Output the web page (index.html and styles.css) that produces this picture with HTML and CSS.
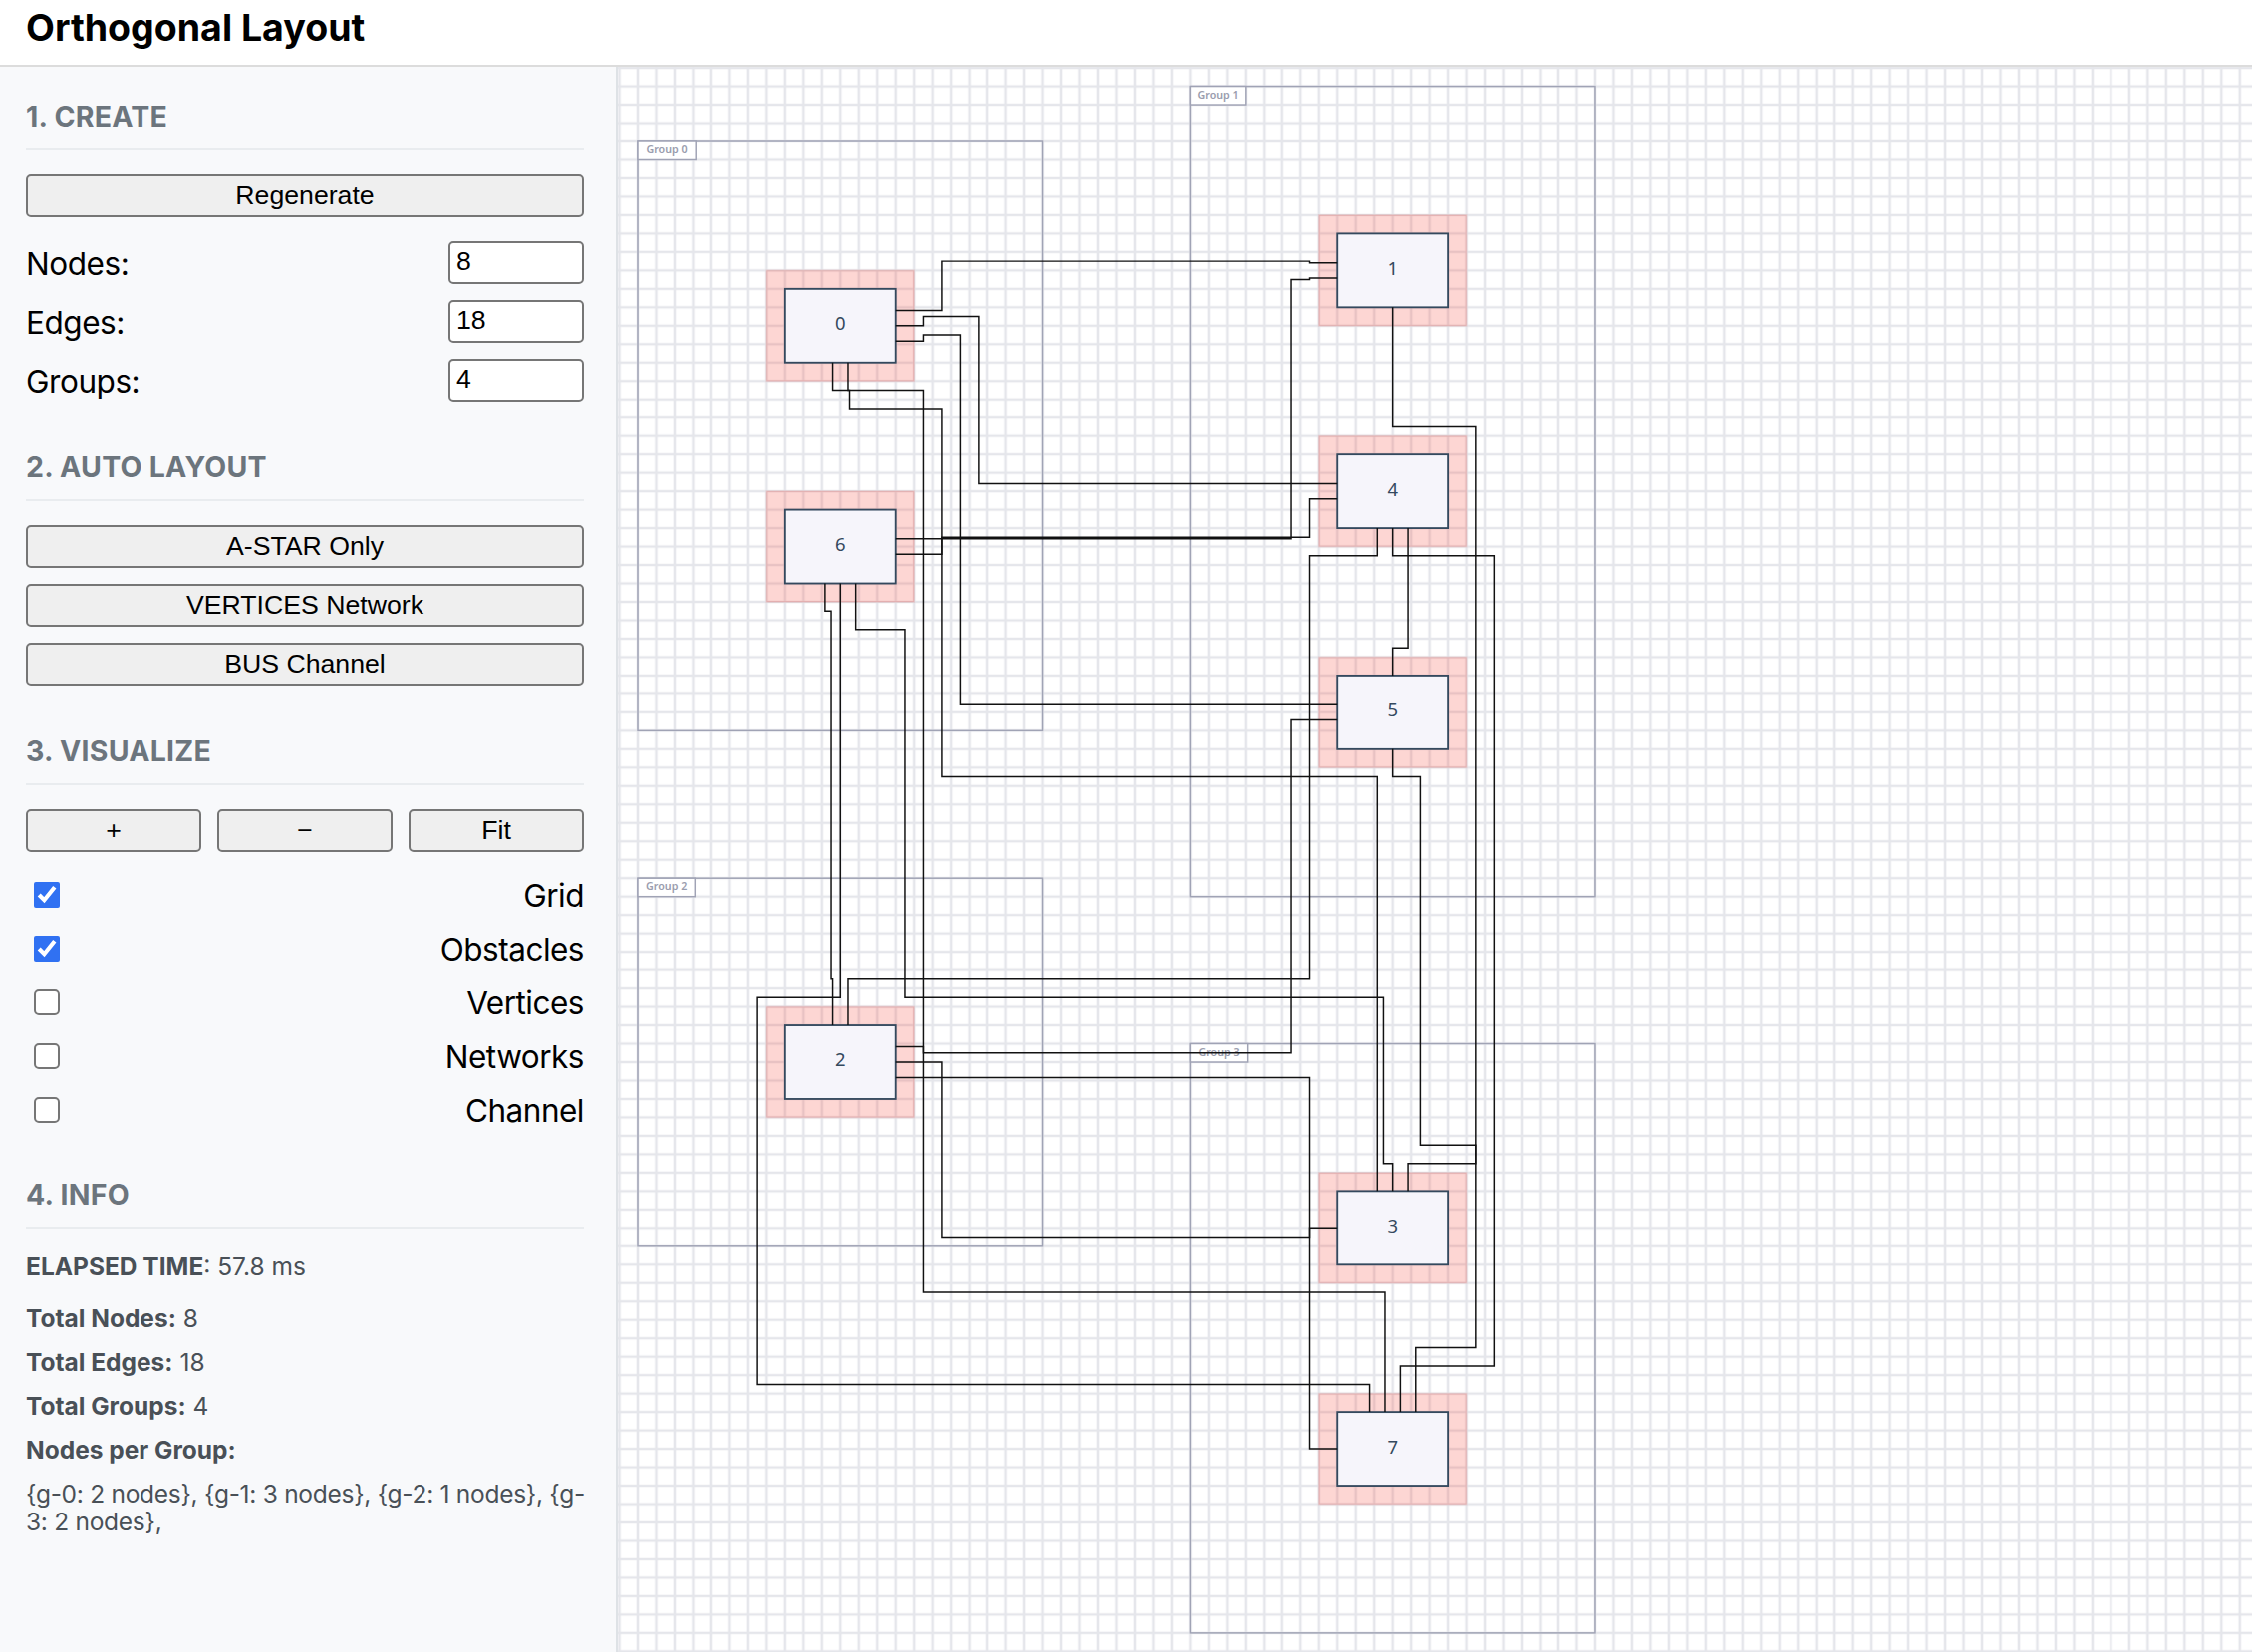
FILE: index.html
```html
<!DOCTYPE html>
<html lang="en">
<head>
<meta charset="utf-8">
<title>Orthogonal Layout</title>
<link rel="stylesheet" href="styles.css">
</head>
<body>
<header class="header"><h1 class="title">Orthogonal Layout</h1></header>
<main class="main">
  <aside class="sidebar">
    <section class="section create">
      <h2 class="heading">1. CREATE</h2>
      <button class="btn">Regenerate</button>
      <label class="field"><span>Nodes:</span><input class="input" type="text" value="8"></label>
      <label class="field"><span>Edges:</span><input class="input" type="text" value="18"></label>
      <label class="field"><span>Groups:</span><input class="input" type="text" value="4"></label>
    </section>
    <section class="section layout">
      <h2 class="heading">2. AUTO LAYOUT</h2>
      <button class="btn">A-STAR Only</button>
      <button class="btn">VERTICES Network</button>
      <button class="btn">BUS Channel</button>
    </section>
    <section class="section visualize">
      <h2 class="heading">3. VISUALIZE</h2>
      <div class="zoom"><button class="btn">+</button><button class="btn">−</button><button class="btn">Fit</button></div>
      <label class="check"><input class="box" type="checkbox" checked><span>Grid</span></label>
      <label class="check"><input class="box" type="checkbox" checked><span>Obstacles</span></label>
      <label class="check"><input class="box" type="checkbox"><span>Vertices</span></label>
      <label class="check"><input class="box" type="checkbox"><span>Networks</span></label>
      <label class="check"><input class="box" type="checkbox"><span>Channel</span></label>
    </section>
    <section class="section info">
      <h2 class="heading">4. INFO</h2>
      <p class="line elapsed"><b>ELAPSED TIME</b>: 57.8 ms</p>
      <p class="line"><b>Total Nodes:</b> 8</p>
      <p class="line"><b>Total Edges:</b> 18</p>
      <p class="line"><b>Total Groups:</b> 4</p>
      <p class="line"><b>Nodes per Group:</b></p>
      <p class="line counts">{g-0: 2 nodes}, {g-1: 3 nodes}, {g-2: 1 nodes}, {g-<br>3: 2 nodes},</p>
    </section>
  </aside>
  <svg class="canvas" width="1640" height="1591" viewBox="620 67 1640 1591">
    <defs>
      <pattern id="grid" width="10" height="10" patternUnits="userSpaceOnUse" patternTransform="translate(640 142) scale(1.848)">
        <path class="grid-line" d="M0 0H10M0 10H10M0 0V10M10 0V10"/>
      </pattern>
    </defs>
    <rect x="620" y="67" width="1640" height="1591" fill="url(#grid)"/>
    <g transform="translate(640 142) scale(1.848)">
      <g class="group">
        <rect x="0" y="0" width="220" height="320"/><rect x="300" y="-30" width="220" height="440"/>
        <rect x="0" y="400" width="220" height="200"/><rect x="300" y="490" width="220" height="320"/>
      </g>
      <g class="tag">
        <rect x="0" y="0" width="31.5" height="10"/><text x="15.7" y="6.6">Group 0</text>
        <rect x="300" y="-30" width="30" height="10"/><text x="315" y="-23.4">Group 1</text>
        <rect x="0" y="400" width="31" height="10"/><text x="15.5" y="406.6">Group 2</text>
        <rect x="300" y="490" width="31" height="10"/><text x="315.5" y="496.6">Group 3</text>
      </g>
      <g class="obstacle">
        <rect x="70" y="70" width="80" height="60"/><rect x="70" y="190" width="80" height="60"/>
        <rect x="70" y="470" width="80" height="60"/><rect x="370" y="40" width="80" height="60"/>
        <rect x="370" y="160" width="80" height="60"/><rect x="370" y="280" width="80" height="60"/>
        <rect x="370" y="560" width="80" height="60"/><rect x="370" y="680" width="80" height="60"/>
      </g>
      <g class="node">
        <rect x="80" y="80" width="60" height="40"/><text x="110" y="102.4">0</text>
        <rect x="80" y="200" width="60" height="40"/><text x="110" y="222.4">6</text>
        <rect x="80" y="480" width="60" height="40"/><text x="110" y="502.4">2</text>
        <rect x="380" y="50" width="60" height="40"/><text x="410" y="72.4">1</text>
        <rect x="380" y="170" width="60" height="40"/><text x="410" y="192.4">4</text>
        <rect x="380" y="290" width="60" height="40"/><text x="410" y="312.4">5</text>
        <rect x="380" y="570" width="60" height="40"/><text x="410" y="592.4">3</text>
        <rect x="380" y="690" width="60" height="40"/><text x="410" y="712.4">7</text>
      </g>
      <g class="edge">
        <path d="M140 91.67H165V65H365V65.83H380"/>
        <path d="M140 100H155V95H185V185.83H380"/>
        <path d="M140 108.33H155V105H175V305.83H380"/>
        <path d="M105.83 120V135H155V625H405.83V690"/>
        <path d="M114.17 120V135H115V145H165V345H401.67V570"/>
        <path d="M140 215.83H355V75H365V74.17H380"/>
        <path d="M140 224.17H165V215H365V194.17H380"/>
        <path d="M101.67 240V255H105V455H105.83V480"/>
        <path d="M110 240V465H65V675H397.5V690"/>
        <path d="M118.33 240V265H145V465H405V555H410V570"/>
        <path d="M401.67 210V225H365V455H114.17V480"/>
        <path d="M140 491.67H155V495H355V314.17H380"/>
        <path d="M140 500H165V595H365V590H380"/>
        <path d="M140 508.33H365V710H380"/>
        <path d="M410 90V155H455V655H422.5V690"/>
        <path d="M410 210V225H465V665H414.17V690"/>
        <path d="M418.33 210V275H410V290"/>
        <path d="M410 330V345H425V545H455V555H418.33V570"/>
      </g>
    </g>
  </svg>
</main>
</body>
</html>
```
FILE: styles.css
```css
* { box-sizing: border-box; }
body { margin: 0; height: 1658px; overflow: hidden; background: #fff; color: #000; font-family: Inter, sans-serif; }
.header { height: 67px; padding: 6px 26px 0; border-bottom: 2px solid #dcdcdc; }
.title { margin: 0; font-size: 37.5px; line-height: 44px; font-weight: 700; letter-spacing: 0; }
.main { display: flex; height: 1591px; }
.sidebar { width: 620px; flex: none; padding: 32px 32px 0 26px; background: #f8f9fb; border-right: 2px solid #dee2e6; }
.section { display: flex; flex-direction: column; }
.heading { margin: 0 0 24px; height: 52px; border-bottom: 2px solid #e9ecef; font-size: 28.5px; line-height: 36px; font-weight: 700; letter-spacing: .25px; color: #6c757d; }
.btn { height: 43px; width: 100%; padding: 0 0 2px; border: 2px solid #767676; border-radius: 5px; background: #efefef; color: #000; font: 26.67px/36px "Liberation Sans", sans-serif; }
.create { height: 352px; }
.create .btn { margin-bottom: 17px; }
.field { display: flex; justify-content: space-between; align-items: center; height: 59px; font-size: 31.5px; letter-spacing: -0.45px; }
.input { width: 136px; height: 43px; margin-bottom: 3px; padding: 0 6px 2px; border: 2px solid #767676; border-radius: 5px; background: #fff; font: 26.67px "Liberation Sans", sans-serif; }
.layout { height: 285px; }
.layout .btn { margin-bottom: 16px; }
.zoom { display: grid; grid-template-columns: repeat(3, 1fr); gap: 16px; margin-bottom: 16px; }
.visualize { height: 445px; }
.check { display: flex; justify-content: space-between; align-items: center; height: 54px; font-size: 31.5px; letter-spacing: -0.5px; }
.box { width: 26px; height: 26px; margin: 0 0 0 8px; accent-color: #3071f2; }
.box:not(:checked) { appearance: none; border: 2px solid #767676; border-radius: 5px; background: #fff; }
.info { color: #495057; font-size: 24.5px; }
.line { margin: 0 0 16px; line-height: 28px; white-space: nowrap; }
.line b { font-weight: 700; }
.elapsed { margin-bottom: 24px; }
.counts { letter-spacing: -0.28px; }
.canvas { display: block; flex: none; }
.grid-line { stroke: #e5e6eb; stroke-width: 1.4; fill: none; }
.group rect { fill: none; stroke: #a0a3b5; stroke-width: .8; }
.tag rect { fill: #fff; stroke: #a0a3b5; stroke-width: .8; }
.tag text { font: 600 5.8px "Noto Sans", sans-serif; fill: #9a9dae; text-anchor: middle; }
.obstacle rect { fill: rgba(244, 67, 54, .22); stroke: rgba(200, 60, 60, .14); stroke-width: 1; }
.node rect { fill: #f6f5fb; stroke: #34495e; stroke-width: 1; }
.node text { font: 10px "Noto Sans", sans-serif; fill: #34495e; text-anchor: middle; }
.edge path { fill: none; stroke: #111; stroke-width: .8; }
```
